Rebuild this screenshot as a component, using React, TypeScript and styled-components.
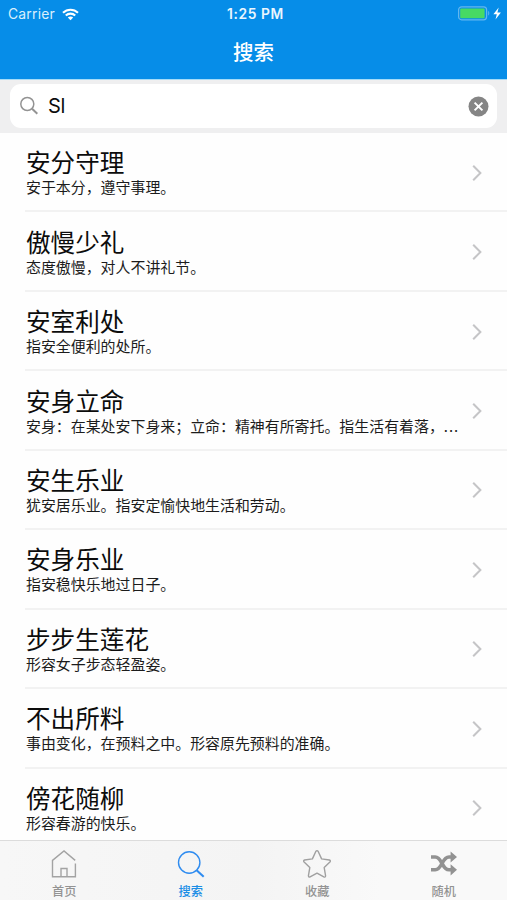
import React from 'react';
import styled, { createGlobalStyle } from 'styled-components';

const GlobalStyle = createGlobalStyle`
  * { box-sizing: border-box; }
  body { margin: 0; background: #fff; }
`;

const Screen = styled.div`
  width: 507px;
  height: 900px;
  display: flex;
  flex-direction: column;
  overflow: hidden;
  background: #fefefe;
  color: #0c0c0c;
  font-family: Inter, 'Noto Sans CJK SC', sans-serif;
`;

const Header = styled.header`
  flex: 0 0 80px;
  background: #068de8;
  border-bottom: 1px solid #a5dcf8;
  color: #fff;
`;

const StatusBar = styled.div`
  height: 27px;
  padding: 1px 5px 0 8px;
  display: grid;
  grid-template-columns: 1fr auto 1fr;
  align-items: center;
  font-size: 14px;
  line-height: 26px;
`;

const Carrier = styled.div`
  display: flex;
  align-items: center;
  gap: 7px;
  color: #d9effc;
  font-size: 13.9px;
  letter-spacing: 0.2px;
`;

const Clock = styled.div`
  font-size: 13.8px;
  font-weight: 600;
  letter-spacing: 0.6px;
  color: #eaf6fe;
  padding-left: 1px;
`;

const Power = styled.div`
  display: flex;
  justify-content: flex-end;
`;

const NavTitle = styled.h1`
  margin: 0;
  height: 51px;
  line-height: 51px;
  text-align: center;
  font-size: 20.5px;
  font-weight: 500;
`;

const SearchBar = styled.div`
  flex: 0 0 53px;
  padding: 4px 10px 5px;
  background: #efeff0;
`;

const SearchField = styled.div`
  height: 44px;
  padding: 0 8px 0 10px;
  display: flex;
  align-items: center;
  gap: 8px;
  background: #fff;
  border-radius: 11px;
`;

const Query = styled.span`
  flex: 1;
  font-family: Inter, sans-serif;
  font-size: 20px;
  letter-spacing: -0.3px;
`;

const List = styled.main`
  flex: 1;
  min-height: 0;
  overflow: hidden;
`;

const Row = styled.div`
  height: 79.45px;
  margin-left: 25px;
  padding: 2px 24px 0 1px;
  display: flex;
  align-items: center;
  border-bottom: 2px solid #f2f2f2;
`;

const RowText = styled.div`
  width: 440px;
  margin-right: auto;
  padding-top: 1px;
`;

const Idiom = styled.div`
  font-size: 24.6px;
  line-height: 28px;
  white-space: nowrap;
`;

const Meaning = styled.div`
  font-family: 'Noto Sans CJK SC', sans-serif;
  font-size: 14.93px;
  line-height: 20px;
  white-space: nowrap;
  color: #1c1c1c;
`;

const Dots = styled.span`
  letter-spacing: 1px;
`;

const TabBar = styled.nav`
  flex: 0 0 60px;
  display: grid;
  grid-template-columns: repeat(4, 1fr);
  padding-left: 1px;
  background: linear-gradient(90deg, #f7f7f7, #f4f4f4 50%, #f9f9f9 75%);
  border-top: 1px solid #dcdcdc;
`;

const Tab = styled.div<{ $active?: boolean }>`
  display: flex;
  flex-direction: column;
  align-items: center;
  padding-top: 8px;
  color: ${p => (p.$active ? '#1b8ee6' : '#939393')};
`;

const TabLabel = styled.span`
  margin-top: 5px;
  font-size: 12.2px;
  line-height: 16px;
  font-weight: 500;
`;

const Wifi = () => (
  <svg width="17" height="13" viewBox="0 0 17 13" fill="none" stroke="#fff" strokeWidth="2.1">
    <path d="M1 4.8C5.2.7 11.8.7 16 4.8" />
    <path d="M3.8 7.6c2.6-2.6 6.8-2.6 9.4 0" />
    <path d="M8.5 12.2 5.8 9.6c1.5-1.5 3.9-1.5 5.4 0z" fill="#fff" stroke="none" />
  </svg>
);

const Battery = () => (
  <svg width="44" height="16" viewBox="0 0 44 16">
    <rect x="0.6" y="0.8" width="28" height="13" rx="3" fill="none" stroke="#63b7ef" strokeWidth="1.2" />
    <rect x="2.2" y="2.6" width="24.4" height="9.6" rx="1" fill="#47da64" />
    <path d="M30.2 5c1.4.5 1.4 4.1 0 4.6z" fill="#63b7ef" />
    <path d="M40.7 1.4 35.4 8.2h3.4l-1.3 5.2 5.4-7h-3.5z" fill="#fff" />
  </svg>
);

const Magnifier = () => (
  <svg width="20" height="20" viewBox="0 0 20 20" fill="none" stroke="#939393">
    <circle cx="7.3" cy="8" r="6.5" strokeWidth="1.5" />
    <path d="m12.1 12.8 5.2 5" strokeWidth="2" />
  </svg>
);

const Clear = () => (
  <svg width="21" height="21" viewBox="0 0 21 21">
    <circle cx="10.5" cy="10.5" r="10" fill="#858585" />
    <path d="m6.6 6.6 7.8 7.8m0-7.8-7.8 7.8" stroke="#fff" strokeWidth="2" />
  </svg>
);

const Chevron = () => (
  <svg width="12" height="18" viewBox="0 0 12 18" fill="none" stroke="#c5c5c7" strokeWidth="2">
    <path d="m2.2 1.7 7.2 7.3-7.2 7.3" />
  </svg>
);

const HomeIcon = () => (
  <svg width="28" height="30" viewBox="0 0 28 30" fill="none" stroke="#a3a3a3" strokeWidth="1.4">
    <path d="M25.2 11.4 14 2 2.5 11.4v16.4h22.9V14.5" />
    <path d="M11 27.5v-8h6v8" />
  </svg>
);

const SearchIcon = () => (
  <svg width="28" height="30" viewBox="0 0 28 30" fill="none" stroke="#2f8cf0">
    <circle cx="12.2" cy="13.5" r="10.7" strokeWidth="1.4" />
    <path d="m19.6 21.2 7.1 6.5" strokeWidth="2.1" />
  </svg>
);

const StarIcon = () => (
  <svg width="28" height="30" viewBox="0 0 28 30" fill="none" stroke="#a0a0a0" strokeWidth="1.4" strokeLinejoin="round">
    <path d="M12.8 2.5q1.2-1.8 2.4 0l3.4 7.4 7.8 1.1q1.7.6.5 2l-5.7 5.6 1.4 8.2q-.1 1.8-1.8 1.1L14 24.2l-6.9 3.7q-1.6.6-1.7-1.1l1.4-8.2-5.7-5.6q-1.2-1.4.5-2l7.8-1.1z" />
  </svg>
);

const ShuffleIcon = () => (
  <svg width="28" height="30" viewBox="0 0 28 30" fill="none" stroke="#929292" strokeWidth="3.6">
    <path d="M1 8h4.2C12.2 8 11.8 20.8 19 20.8H22M1 20.8h4.2C12.2 20.8 11.8 8 19 8H22" />
    <path d="M20.6 2.4 27 8l-6.4 5.6zM20.6 15.2l6.4 5.6-6.4 5.6z" fill="#929292" stroke="none" />
  </svg>
);

const idioms = [
  { name: '安分守理', meaning: '安于本分，遵守事理。' },
  { name: '傲慢少礼', meaning: '态度傲慢，对人不讲礼节。' },
  { name: '安室利处', meaning: '指安全便利的处所。' },
  { name: '安身立命', meaning: '安身：在某处安下身来；立命：精神有所寄托。指生活有着落，', more: true },
  { name: '安生乐业', meaning: '犹安居乐业。指安定愉快地生活和劳动。' },
  { name: '安身乐业', meaning: '指安稳快乐地过日子。' },
  { name: '步步生莲花', meaning: '形容女子步态轻盈姿。' },
  { name: '不出所料', meaning: '事由变化，在预料之中。形容原先预料的准确。' },
  { name: '傍花随柳', meaning: '形容春游的快乐。' },
];

const tabs = [
  { label: '首页', Icon: HomeIcon },
  { label: '搜索', Icon: SearchIcon, active: true },
  { label: '收藏', Icon: StarIcon },
  { label: '随机', Icon: ShuffleIcon },
];

export default function App() {
  return (
    <>
      <GlobalStyle />
      <Screen lang="zh-CN">
        <Header>
          <StatusBar>
            <Carrier>Carrier <Wifi /></Carrier>
            <Clock>1:25 PM</Clock>
            <Power><Battery /></Power>
          </StatusBar>
          <NavTitle>搜索</NavTitle>
        </Header>
        <SearchBar>
          <SearchField>
            <Magnifier />
            <Query>Sl</Query>
            <Clear />
          </SearchField>
        </SearchBar>
        <List>
          {idioms.map(({ name, meaning, more }) => (
            <Row key={name}>
              <RowText>
                <Idiom>{name}</Idiom>
                <Meaning>
                  {meaning}
                  {more && <Dots>...</Dots>}
                </Meaning>
              </RowText>
              <Chevron />
            </Row>
          ))}
        </List>
        <TabBar>
          {tabs.map(({ label, Icon, active }) => (
            <Tab key={label} $active={active}>
              <Icon />
              <TabLabel>{label}</TabLabel>
            </Tab>
          ))}
        </TabBar>
      </Screen>
    </>
  );
}
